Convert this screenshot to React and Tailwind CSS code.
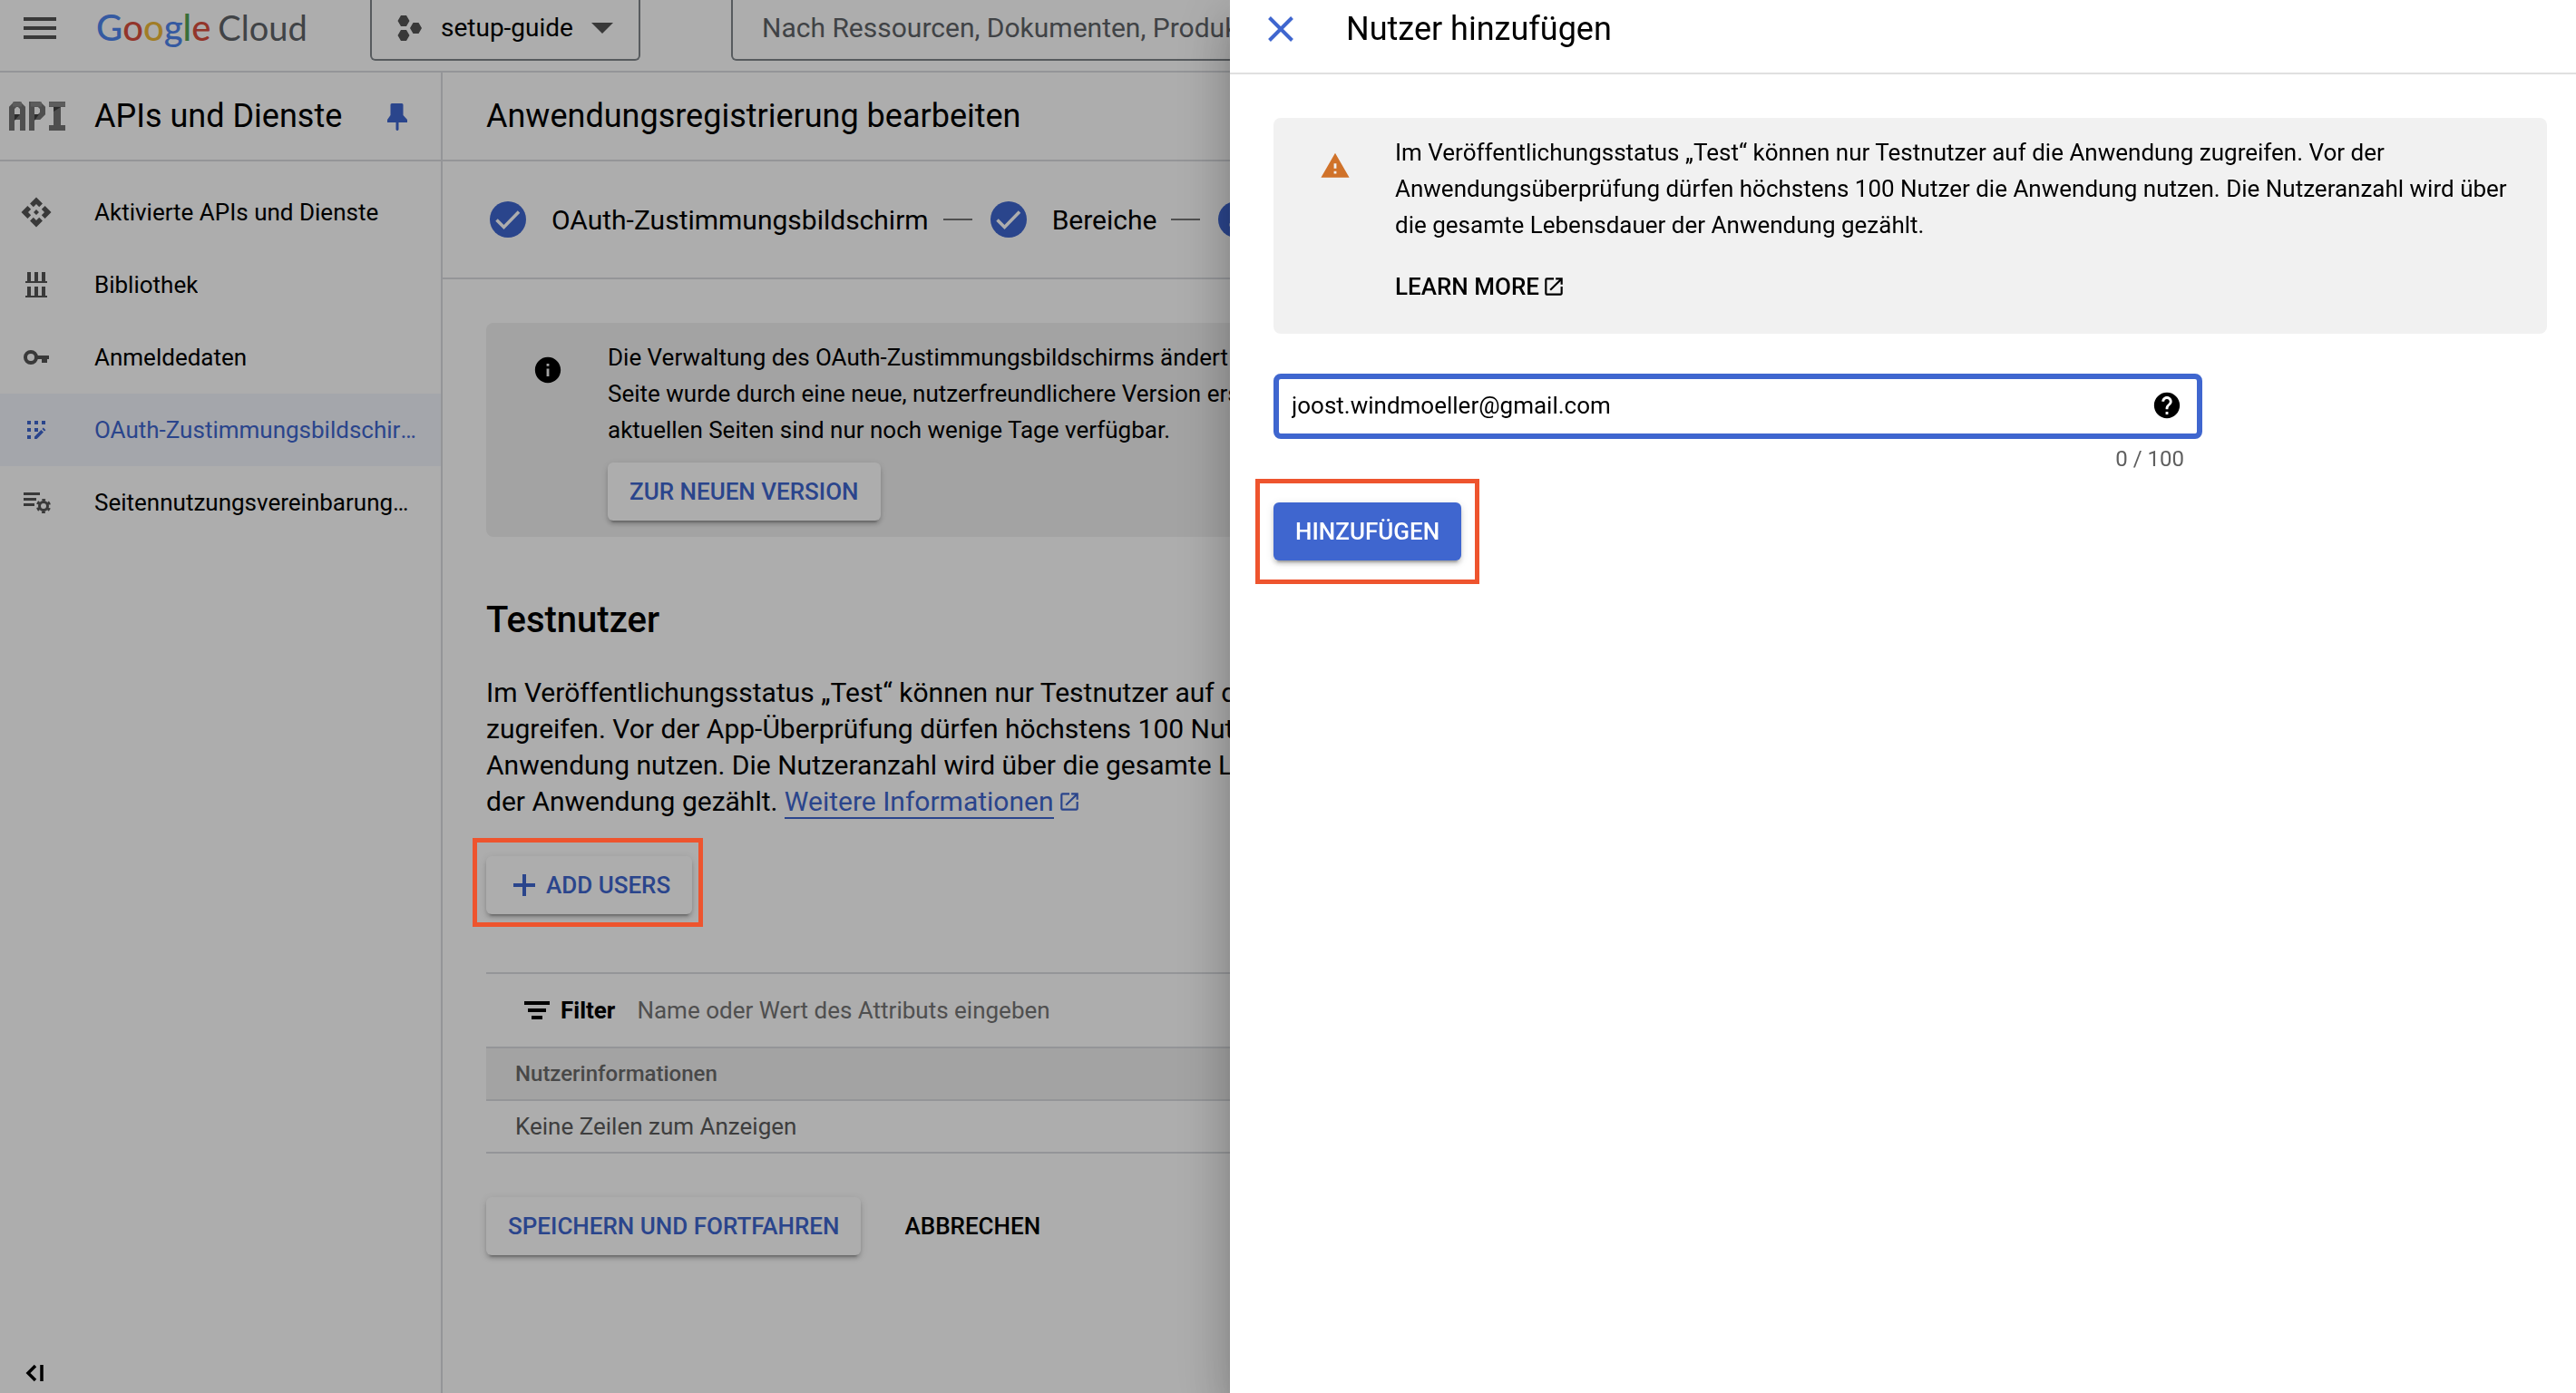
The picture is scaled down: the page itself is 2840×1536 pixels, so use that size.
import React from "react";
import { MdApi, MdEdit, MdOpenInNew, MdInfo, MdHelp, MdWarning } from "react-icons/md";

const BUTTON =
  "flex h-16 items-center rounded-md px-6 text-[26px] font-medium shadow-[0_6px_2px_-4px_rgba(0,0,0,0.2),0_4px_4px_rgba(0,0,0,0.14),0_2px_10px_rgba(0,0,0,0.12)]";

function LibraryIcon() {
  return (
    <svg width="36" height="36" viewBox="0 0 36 36" fill="currentColor">
      <path d="M8 4h4v10H8zM16 4h4v10h-4zM24 4h4v10h-4zM6 14h24v2H6zM8 20h4v10H8zM16 20h4v10h-4zM24 20h4v10h-4zM6 30h24v2H6z" />
    </svg>
  );
}

function KeyIcon() {
  return (
    <svg width="36" height="36" viewBox="0 0 36 36" fill="none">
      <circle cx="12" cy="18" r="6" stroke="currentColor" strokeWidth="4" />
      <path d="M19 16h13v4h-2v4h-6v-4h-5z" fill="currentColor" />
    </svg>
  );
}

function ConsentIcon() {
  return (
    <svg width="36" height="36" viewBox="0 0 36 36" fill="currentColor">
      <path d="M8 8h4v4H8zM16 8h4v4h-4zM24 8h4v4h-4zM8 16h4v4H8zM16 16h4v4h-4zM8 24h4v4H8z" />
      <path d="M16 25.400l7.400-7.400 2.600 2.600-7.400 7.400H16zM24.400 17l1.400-1.400 2.600 2.600-1.400 1.400z" />
    </svg>
  );
}

function AgreementIcon() {
  return (
    <svg width="36" height="36" viewBox="0 0 36 36" fill="none">
      <path d="M4 7h18v3H4zM4 13h14v3H4zM4 19h12v3H4z" fill="currentColor" />
      <circle cx="26" cy="22" r="4.500" stroke="currentColor" strokeWidth="3" />
      <circle cx="26" cy="22" r="6.800" stroke="currentColor" strokeWidth="2.600" strokeDasharray="3.560 3.560" strokeDashoffset="1.780" transform="rotate(30 26 22)" />
    </svg>
  );
}

function ApiLogo() {
  return (
    <svg width="62" height="32" viewBox="0 0 62 32" fill="none" aria-hidden="true">
      <g stroke="#757575" strokeWidth="6">
        <path d="M3 32V7l4-4h4l4 4v25M3 17h12" />
        <path d="M25 32V3h8l4 4v6l-4 4h-8" />
        <path d="M44 3h18M44 29h18" />
        <path d="M53 4v26" strokeWidth="8" />
      </g>
      <g stroke="#8a8a8a" strokeWidth="5">
        <path d="M4 3h10M24 3h12M44 3h18" />
      </g>
      <path d="M6 14h6l-6 7zM28 14h5l-5 7zM49 6h8l-8 5z" fill="#3f3f3f" />
    </svg>
  );
}

const NAV = [
  { label: "Aktivierte APIs und Dienste", icon: <MdApi size={36} /> },
  { label: "Bibliothek", icon: <LibraryIcon /> },
  { label: "Anmeldedaten", icon: <KeyIcon /> },
  { label: "OAuth-Zustimmungsbildschirm", icon: <ConsentIcon />, active: true },
  { label: "Seitennutzungsvereinbarungen verwalten", icon: <AgreementIcon /> },
];

function TopBar() {
  return (
    <header className="flex h-20 shrink-0 items-start border-b-2 border-[#dadce0] pl-6">
      <button aria-label="Navigationsmenü" className="flex h-[62px] items-center">
        <svg width="40" height="24" viewBox="0 0 40 24" fill="#555">
          <path d="M2 0h36v4H2zM2 10h36v4H2zM2 20h36v4H2z" />
        </svg>
      </button>
      <a href="#" aria-label="Google Cloud" className="ml-[42px] flex h-[62px] w-[238px] items-baseline whitespace-nowrap pt-2 font-['Lato',sans-serif] text-[40px] font-medium leading-[44px]">
        <span className="text-[#4f85ee]">G</span>
        <span className="text-[#d94f3f]">o</span>
        <span className="text-[#eeb939]">o</span>
        <span className="text-[#4f85ee]">g</span>
        <span className="text-[#55a355]">l</span>
        <span className="text-[#d94f3f]">e</span>
        <span className="ml-2 text-[38px] font-normal text-[#5f6368]">Cloud</span>
      </a>
      <button className="ml-[64px] flex h-[67px] w-[298px] items-center rounded-b-md border-2 border-t-0 border-[#80868b] pb-1 pl-7 text-[28px]">
        <svg width="28" height="28" viewBox="0 0 28 28" fill="#555">
          <path d="M4 0h6l3.500 6L10 12H4L.5 6zM4 16h6l3.500 6-3.500 6H4L.5 22zM17.500 8h6l3.500 6-3.500 6h-6L14 14z" />
        </svg>
        <span className="ml-5">setup-guide</span>
        <svg width="24" height="12" viewBox="0 0 24 12" className="ml-5" fill="#555">
          <path d="M0 0h24L12 12z" />
        </svg>
      </button>
      <input
        aria-label="Suche"
        placeholder="Nach Ressourcen, Dokumenten, Produkten und mehr suchen"
        className="ml-[100px] h-[67px] min-w-0 flex-1 rounded-b-md border-2 border-t-0 border-[#80868b] bg-transparent pb-1 pl-8 text-[30px] placeholder:text-[#5f6368]"
      />
    </header>
  );
}

function Sidebar() {
  return (
    <aside className="flex w-[488px] shrink-0 flex-col border-r-2 border-[#dadce0]">
      <div className="flex h-[98px] items-center border-b-2 border-[#dadce0] pl-2.5">
        <ApiLogo />
        <h2 className="ml-8 flex-1 text-[36px]">APIs und Dienste</h2>
        <svg width="24" height="32" viewBox="0 0 24 32" className="mr-9" fill="#3f66cf">
          <path d="M6 2h11a1.500 1.500 0 0 1 1.500 1.500V15l4.500 5v3h-9.500v8l-1.500 1.500-1.500-1.500v-8H1v-3l3.500-5V3.500A1.500 1.500 0 0 1 6 2z" />
        </svg>
      </div>
      <nav className="mt-4">
        {NAV.map((item) => (
          <a
            key={item.label}
            href="#"
            className={
              item.active
                ? "flex h-20 items-center gap-[46px] bg-[#f2f5fd] pl-[22px] pr-6 text-[#3f66cf]"
                : "flex h-20 items-center gap-[46px] pl-[22px] pr-6"
            }
          >
            <span className={item.active ? "" : "text-[#555]"}>{item.icon}</span>
            <span className="truncate text-[26px]">{item.label}</span>
          </a>
        ))}
      </nav>
      <button aria-label="Menü minimieren" className="mb-3 ml-7 mt-auto self-start">
        <svg width="22" height="20" viewBox="0 0 22 20" fill="none" stroke="#000" strokeWidth="3.500">
          <path d="M11 2L3 10l8 8M18 1v18" />
        </svg>
      </button>
    </aside>
  );
}

function StepDone() {
  return (
    <svg width="40" height="40" viewBox="0 0 40 40" className="shrink-0" fill="none">
      <circle cx="20" cy="20" r="20" fill="#3f66cf" />
      <path d="M7.500 20.500l8 8L32 11.500" stroke="#fff" strokeWidth="3.500" />
    </svg>
  );
}

function Stepper() {
  return (
    <ol className="flex h-[130px] items-center overflow-hidden whitespace-nowrap border-b-2 border-[#dadce0] pl-[52px] text-[30px]">
      <li className="flex items-center gap-7">
        <StepDone />
        OAuth-Zustimmungsbildschirm
      </li>
      <li className="flex items-center">
        <span className="ml-4 mr-5 h-0.5 w-8 bg-[#757575]" />
        <StepDone />
        <span className="ml-7">Bereiche</span>
      </li>
      <li className="flex items-center" aria-label="Testnutzer">
        <span className="ml-4 mr-5 h-0.5 w-8 bg-[#757575]" />
        <span className="flex size-10 items-center justify-center rounded-full bg-[#3f66cf] text-white">
          <MdEdit size={20} />
        </span>
      </li>
    </ol>
  );
}

function Main() {
  return (
    <main className="min-w-0 flex-1">
      <h1 className="flex h-[98px] items-center border-b-2 border-[#dadce0] pl-12 text-[36px]">
        Anwendungsregistrierung bearbeiten
      </h1>
      <Stepper />
      <div className="ml-12 mt-12 w-[1040px]">
        <section className="flex h-[236px] rounded-lg bg-[#f1f1f1] pl-[51px] pt-[18px]">
          <MdInfo size={34} className="mt-[17px] shrink-0" />
          <div className="ml-[49px]">
            <p className="text-[26px] leading-10">
              Die Verwaltung des OAuth-Zustimmungsbildschirms ändert sich. Diese
              <br />
              Seite wurde durch eine neue, nutzerfreundlichere Version ersetzt. Die
              <br />
              aktuellen Seiten sind nur noch wenige Tage verfügbar.
            </p>
            <button className={`${BUTTON} mt-4 bg-white text-[#3f66cf]`}>ZUR NEUEN VERSION</button>
          </div>
        </section>

        <h2 className="mt-[68px] text-[40px] font-medium leading-[48px]">Testnutzer</h2>
        <p className="mt-9 text-[30px] leading-10">
          Im Veröffentlichungsstatus „Test“ können nur Testnutzer auf die Anwendung
          <br />
          zugreifen. Vor der App-Überprüfung dürfen höchstens 100 Nutzer die
          <br />
          Anwendung nutzen. Die Nutzeranzahl wird über die gesamte Lebensdauer
          <br />
          der Anwendung gezählt.{" "}
          <a href="#" className="text-[#3f66cf]">
            <span className="border-b-2 border-[#3f66cf]">Weitere Informationen</span>
            <MdOpenInNew size={26} className="ml-1 inline-block align-[-3px]" />
          </a>
        </p>

        <div className="relative mt-10 w-fit">
          <button className={`${BUTTON} bg-white pl-[30px] text-[#3f66cf]`}>
            <svg width="24" height="24" viewBox="0 0 24 24" className="mr-3" fill="currentColor">
              <path d="M10 0h4v10h10v4H14v10h-4V14H0v-4h10z" />
            </svg>
            ADD USERS
          </button>
          <div className="absolute -bottom-3.5 -left-[15px] -right-3 -top-5 z-20 border-[5px] border-[#ee542e]" />
        </div>
      </div>

      <div className="ml-12 mr-12 mt-16">
        <div className="flex h-[82px] items-center border-t-2 border-[#dadce0] pl-[42px] text-[26px]">
          <svg width="28" height="20" viewBox="0 0 28 20">
            <path d="M0 0h28v4H0zM4 8h20v4H4zM8 16h12v4H8z" />
          </svg>
          <label htmlFor="filter" className="ml-3 font-bold">
            Filter
          </label>
          <input
            id="filter"
            placeholder="Name oder Wert des Attributs eingeben"
            className="ml-6 flex-1 bg-transparent placeholder:text-[#757575]"
          />
        </div>
        <table className="w-full text-left">
          <thead>
            <tr className="h-[58px] border-y-2 border-[#dadce0] bg-[#f1f1f1]">
              <th className="pl-8 text-[24px] font-medium text-[#6b6b6b]">Nutzerinformationen</th>
            </tr>
          </thead>
          <tbody>
            <tr className="h-[58px] border-b-2 border-[#dadce0]">
              <td className="pl-8 text-[26px] text-[#5c5c5c]">Keine Zeilen zum Anzeigen</td>
            </tr>
          </tbody>
        </table>
        <div className="mt-12 flex gap-6">
          <button className={`${BUTTON} bg-white text-[#3f66cf]`}>SPEICHERN UND FORTFAHREN</button>
          <button className="h-16 px-6 text-[26px] font-medium">ABBRECHEN</button>
        </div>
      </div>
    </main>
  );
}

function Drawer() {
  return (
    <div
      role="dialog"
      aria-label="Nutzer hinzufügen"
      className="fixed inset-y-0 right-0 z-30 w-[1484px] max-w-full bg-white shadow-[0_16px_20px_-10px_rgba(0,0,0,0.2),0_32px_48px_4px_rgba(0,0,0,0.14),0_12px_60px_10px_rgba(0,0,0,0.12)]"
    >
      <div className="flex h-[82px] items-center border-b-2 border-[#e0e0e0] pb-4 pl-[42px]">
        <button aria-label="Schließen">
          <svg width="28" height="28" viewBox="0 0 28 28" fill="none" stroke="#3f66cf" strokeWidth="4">
            <path d="M1.500 1.500l25 25M26.500 1.500l-25 25" />
          </svg>
        </button>
        <h2 className="ml-[58px] text-[36px]">Nutzer hinzufügen</h2>
      </div>
      <div className="pl-12 pr-8 pt-12">
        <section className="flex rounded-lg bg-[#f1f1f1] pb-8 pl-[51px] pr-8 pt-[18px]">
          <MdWarning size={34} className="mt-[18px] shrink-0 text-[#d0722a]" />
          <div className="ml-[49px]">
            <p className="text-[26px] leading-10">
              Im Veröffentlichungsstatus „Test“ können nur Testnutzer auf die Anwendung zugreifen. Vor der
              Anwendungsüberprüfung dürfen höchstens 100 Nutzer die Anwendung nutzen. Die Nutzeranzahl wird über
              die gesamte Lebensdauer der Anwendung gezählt.
            </p>
            <a href="#" className="mt-7 flex items-center text-[26px] font-medium leading-10">
              LEARN MORE
              <MdOpenInNew size={26} className="ml-[3px]" />
            </a>
          </div>
        </section>
        <div className="mt-11 w-[1024px] max-w-full">
          <div className="relative">
            <input
              aria-label="Nutzer"
              defaultValue="joost.windmoeller@gmail.com"
              className="h-[72px] w-full rounded-lg border-[6px] border-[#3f66cf] bg-white pb-0.5 pl-3.5 pr-16 text-[26px] outline-none"
            />
            <MdHelp size={34} className="absolute right-[22px] top-[18px]" />
          </div>
          <p className="mt-1.5 pr-5 text-right text-[24px] leading-8 text-[#5f5f5f]">0 / 100</p>
        </div>
        <div className="relative mt-8 w-fit">
          <button className={`${BUTTON} bg-[#3f66cf] text-white`}>HINZUFÜGEN</button>
          <div className="pointer-events-none absolute -bottom-[26px] -left-5 -right-5 -top-[26px] border-[5px] border-[#ee542e]" />
        </div>
      </div>
    </div>
  );
}

export default function App() {
  return (
    <div className="flex h-screen flex-col overflow-hidden bg-white font-['Roboto',sans-serif] text-black">
      <TopBar />
      <div className="flex min-h-0 flex-1">
        <Sidebar />
        <Main />
      </div>
      <div className="fixed inset-0 z-10 bg-black/32" />
      <Drawer />
    </div>
  );
}
